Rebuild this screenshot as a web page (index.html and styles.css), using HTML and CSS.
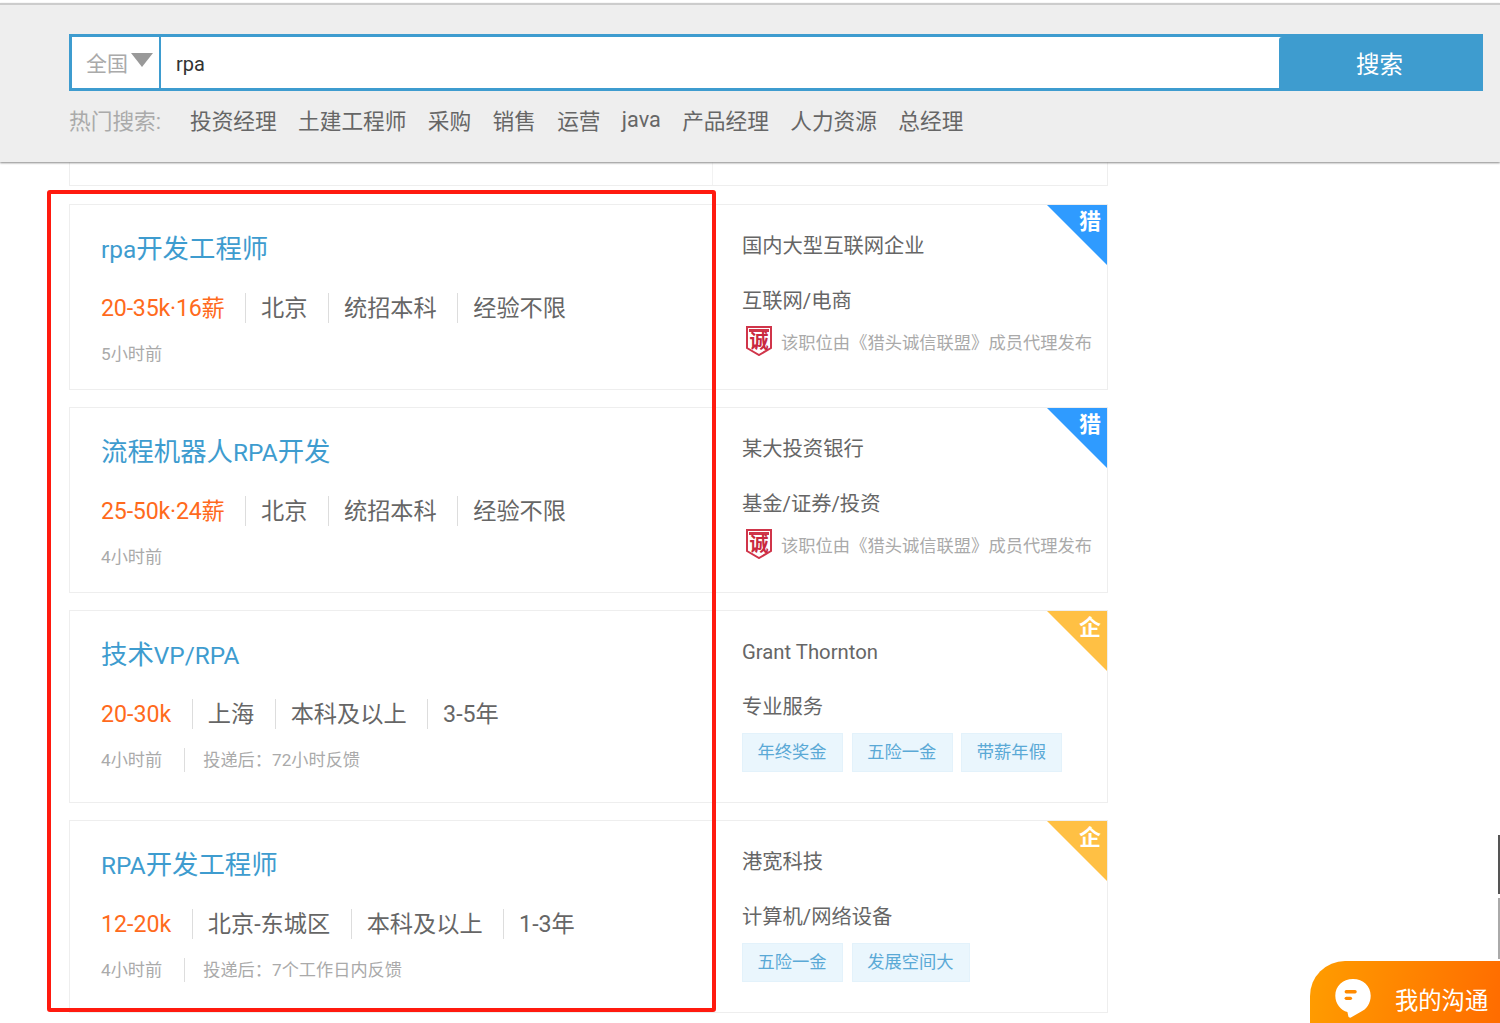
FILE: index.html
```html
<!DOCTYPE html>
<html lang="en">
<head>
  <meta charset="UTF-8">
  <meta name="viewport" content="width=device-width, initial-scale=1.0">
  <title>rpa - 职位搜索</title>
  <link rel="stylesheet" href="styles.css">
</head>
<body>

  <!-- Search header -->
  <div class="search-header">
    <div class="search-box">
      <div class="city-select">全国<span class="city-arrow"></span></div>
      <div class="search-input">rpa</div>
      <div class="search-btn">搜索</div>
    </div>
    <div class="hot-row">
      <span class="hot-label">热门搜索:</span>
      <a class="hot-item">投资经理</a>
      <a class="hot-item">土建工程师</a>
      <a class="hot-item">采购</a>
      <a class="hot-item">销售</a>
      <a class="hot-item">运营</a>
      <a class="hot-item">java</a>
      <a class="hot-item">产品经理</a>
      <a class="hot-item">人力资源</a>
      <a class="hot-item">总经理</a>
    </div>
  </div>

  <!-- Job list -->
  <div class="job-list">
    <div class="job-stub"><div class="stub-mark"></div></div>

    <div class="job-card">
      <div class="job-left">
        <div class="job-title"><span class="latin">rpa</span>开发工程师</div>
        <div class="job-info">
          <span class="salary salary-long">20-35k·16薪</span><span>北京</span><span>统招本科</span><span>经验不限</span>
        </div>
        <div class="job-time"><span>5小时前</span></div>
      </div>
      <div class="job-right">
        <div class="corner corner-hunter"></div>
        <div class="corner-text">猎</div>
        <div class="company">国内大型互联网企业</div>
        <div class="industry">互联网/电商</div>
        <div class="agent">
          <svg class="agent-logo" viewBox="0 0 26 30">
            <path d="M1 1h24v21l-12 7-12-7z" fill="#fff" stroke="#d0354a" stroke-width="2"/>
            <rect x="3" y="3" width="20" height="3" fill="#d0354a"/>
            <text x="13" y="22" text-anchor="middle" font-size="19" font-weight="700" fill="#c9283e">诚</text>
          </svg>
          该职位由《猎头诚信联盟》成员代理发布
        </div>
      </div>
    </div>

    <div class="job-card">
      <div class="job-left">
        <div class="job-title">流程机器人<span class="latin">RPA</span>开发</div>
        <div class="job-info">
          <span class="salary salary-long">25-50k·24薪</span><span>北京</span><span>统招本科</span><span>经验不限</span>
        </div>
        <div class="job-time"><span>4小时前</span></div>
      </div>
      <div class="job-right">
        <div class="corner corner-hunter"></div>
        <div class="corner-text">猎</div>
        <div class="company">某大投资银行</div>
        <div class="industry">基金/证券/投资</div>
        <div class="agent">
          <svg class="agent-logo" viewBox="0 0 26 30">
            <path d="M1 1h24v21l-12 7-12-7z" fill="#fff" stroke="#d0354a" stroke-width="2"/>
            <rect x="3" y="3" width="20" height="3" fill="#d0354a"/>
            <text x="13" y="22" text-anchor="middle" font-size="19" font-weight="700" fill="#c9283e">诚</text>
          </svg>
          该职位由《猎头诚信联盟》成员代理发布
        </div>
      </div>
    </div>

    <div class="job-card">
      <div class="job-left">
        <div class="job-title">技术<span class="latin">VP/RPA</span></div>
        <div class="job-info">
          <span class="salary">20-30k</span><span>上海</span><span>本科及以上</span><span>3-5年</span>
        </div>
        <div class="job-time"><span>4小时前</span><span>投递后&#xFF1A;72小时反馈</span></div>
      </div>
      <div class="job-right">
        <div class="corner corner-company"></div>
        <div class="corner-text">企</div>
        <div class="company">Grant Thornton</div>
        <div class="industry">专业服务</div>
        <div class="tags">
          <span class="tag">年终奖金</span><span class="tag">五险一金</span><span class="tag">带薪年假</span>
        </div>
      </div>
    </div>

    <div class="job-card">
      <div class="job-left">
        <div class="job-title"><span class="latin">RPA</span>开发工程师</div>
        <div class="job-info">
          <span class="salary">12-20k</span><span>北京-东城区</span><span>本科及以上</span><span>1-3年</span>
        </div>
        <div class="job-time"><span>4小时前</span><span>投递后&#xFF1A;7个工作日内反馈</span></div>
      </div>
      <div class="job-right">
        <div class="corner corner-company"></div>
        <div class="corner-text">企</div>
        <div class="company">港宽科技</div>
        <div class="industry">计算机/网络设备</div>
        <div class="tags">
          <span class="tag">五险一金</span><span class="tag">发展空间大</span>
        </div>
      </div>
    </div>
  </div>

  <!-- Red annotation box drawn over the list -->
  <div class="red-box"></div>

  <!-- Page scrollbar sliver -->
  <div class="scroll-dark"></div>
  <div class="scroll-light"></div>

  <!-- Chat button -->
  <div class="chat-btn">
    <svg class="chat-icon" viewBox="0 0 40 44">
      <path d="M20 1C9 1 1 8.500 1 19c0 9 6 15.500 13 17.500l1 4.500c.4 1.500 2 2 3.200 1.200L28 36.500C34.500 33.500 39 27 39 19 39 8.500 31 1 20 1z" fill="#fff"/>
      <rect x="11" y="13" width="13" height="3.500" rx="1.700" fill="#ff8a00"/>
      <rect x="11" y="20" width="8" height="3.500" rx="1.700" fill="#ff8a00"/>
    </svg>
    <span>我的沟通</span>
  </div>

</body>
</html>
```

FILE: styles.css
```css
* {
  box-sizing: border-box;
}
body {
  font-family: Roboto, "Noto Sans CJK SC", sans-serif;
  background-color: #fff;
  color: #666;
  margin: 0;
  padding: 0;
}

/* Search header */
.search-header {
  position: relative;
  z-index: 2;
  height: 159px;
  margin-top: 3px;
  padding: 29px 17px 0 69px;
  background-color: #eee;
  border-top: 2px solid #ccc;
  box-shadow: 0 1px 2px #888;
}
.search-box {
  display: flex;
  height: 57px;
  border: 3px solid #3e9ccf;
  background-color: #fff;
}
.city-select {
  display: flex;
  align-items: center;
  width: 89px;
  padding: 0 0 2px 14px;
  border-right: 2px solid #3e9ccf;
  font-size: 21px;
  color: #aaa;
}
.city-arrow {
  width: 0;
  height: 0;
  margin-left: 3px;
  margin-top: -4px;
  border-left: 11px solid transparent;
  border-right: 11px solid transparent;
  border-top: 14px solid #999;
}
.search-input {
  flex: 1;
  padding-left: 15px;
  font-size: 20px;
  line-height: 55px;
  color: #333;
}
.search-btn {
  width: 204px;
  margin: 0 -3px -3px 0;
  padding-right: 3px;
  background-color: #3e9ccf;
  color: #fff;
  font-size: 23.500px;
  line-height: 56px;
  text-align: center;
  border-radius: 3px 0 0 3px;
}
.hot-row {
  display: flex;
  align-items: center;
  gap: 21.300px;
  height: 34px;
  margin-top: 11px;
  font-size: 21.700px;
}
.hot-label {
  width: 99.700px;
  color: #aaa;
  white-space: nowrap;
}
.hot-item {
  color: #666;
  white-space: nowrap;
}

/* Job list */
.job-list {
  width: 1039px;
  margin-left: 69px;
  display: flex;
  flex-direction: column;
  gap: 17px;
}
.job-stub {
  height: 24px;
  margin-bottom: 1px;
  border: 1px solid #eee;
  border-top: none;
}
.stub-mark {
  width: 643px;
  height: 100%;
  border-right: 1px solid #f2f2f2;
}
.job-card {
  display: flex;
  border: 1px solid #eee;
}
.job-left {
  width: 643px;
  padding: 26px 0 0 31px;
}
.job-title {
  font-size: 26.400px;
  line-height: 36px;
  color: #3e9ccf;
}
.job-title .latin {
  font-size: 24.400px;
}
.job-info {
  display: flex;
  align-items: center;
  height: 30px;
  margin-top: 25px;
  font-size: 23.200px;
  color: #666;
}
.job-info span {
  padding: 0 20.500px 0 15px;
  border-left: 1px solid #ddd;
  line-height: 30px;
  white-space: nowrap;
}
.job-info .salary {
  padding-left: 0;
  border-left: none;
  color: #ff6a1c;
}
.job-info .salary-long {
  letter-spacing: -0.2px;
}
.job-time {
  display: flex;
  align-items: center;
  height: 24px;
  margin-top: 19px;
  font-size: 17.200px;
  color: #aaa;
}
.job-time span {
  padding: 0 22px 0 18px;
  border-left: 1px solid #ddd;
  line-height: 24px;
  white-space: nowrap;
}
.job-time span:first-child {
  padding-left: 0;
  border-left: none;
}
.job-right {
  position: relative;
  flex: 1;
  padding: 26px 0 30px 29px;
}
.corner {
  position: absolute;
  top: 0;
  right: 0;
  width: 60px;
  height: 60px;
  clip-path: polygon(0 0, 100% 0, 100% 100%);
}
.corner-hunter {
  background-color: #2f9bff;
}
.corner-company {
  background-color: #ffc044;
}
.corner-text {
  position: absolute;
  top: 3px;
  right: 6px;
  font-size: 22px;
  font-weight: 700;
  line-height: 28px;
  color: #fff;
}
.company {
  font-size: 20.300px;
  line-height: 30px;
  color: #666;
}
.industry {
  margin-top: 25px;
  font-size: 20.300px;
  line-height: 30px;
  color: #666;
}
.agent {
  display: flex;
  align-items: center;
  height: 30px;
  margin: 10px 0 3px;
  padding-left: 4px;
  font-size: 17.300px;
  color: #aaa;
  white-space: nowrap;
}
.agent-logo {
  width: 26px;
  height: 30px;
  margin-right: 9px;
  flex-shrink: 0;
}
.tags {
  display: flex;
  gap: 8.500px;
  margin-top: 11px;
}
.tag {
  height: 39px;
  padding: 0 15.500px 0 14.500px;
  background-color: #eaf6fd;
  border: 1px solid #e3f2fb;
  font-size: 17.300px;
  line-height: 37px;
  color: #5aa9d6;
  white-space: nowrap;
}

/* Overlays */
.red-box {
  position: absolute;
  left: 47px;
  top: 190px;
  width: 669px;
  height: 822px;
  border: 4px solid #ff1a0f;
  border-radius: 3px;
  pointer-events: none;
}
.scroll-dark {
  position: absolute;
  right: 0;
  top: 835px;
  width: 2px;
  height: 59px;
  background-color: #555;
}
.scroll-light {
  position: absolute;
  right: 0;
  top: 898px;
  width: 2px;
  height: 61px;
  background-color: #aaa;
}
.chat-btn {
  position: fixed;
  left: 1310px;
  top: 961px;
  width: 190px;
  height: 62px;
  overflow: hidden;
  border-radius: 35px 0 0 0;
  background: linear-gradient(100deg, #ff9d00, #ff6c00);
  color: #fff;
  font-size: 23.300px;
}
.chat-icon {
  position: absolute;
  left: 24px;
  top: 17px;
  width: 38px;
  height: 41px;
}
.chat-btn span {
  position: absolute;
  left: 85px;
  top: 23px;
  line-height: 34px;
  white-space: nowrap;
}
```
